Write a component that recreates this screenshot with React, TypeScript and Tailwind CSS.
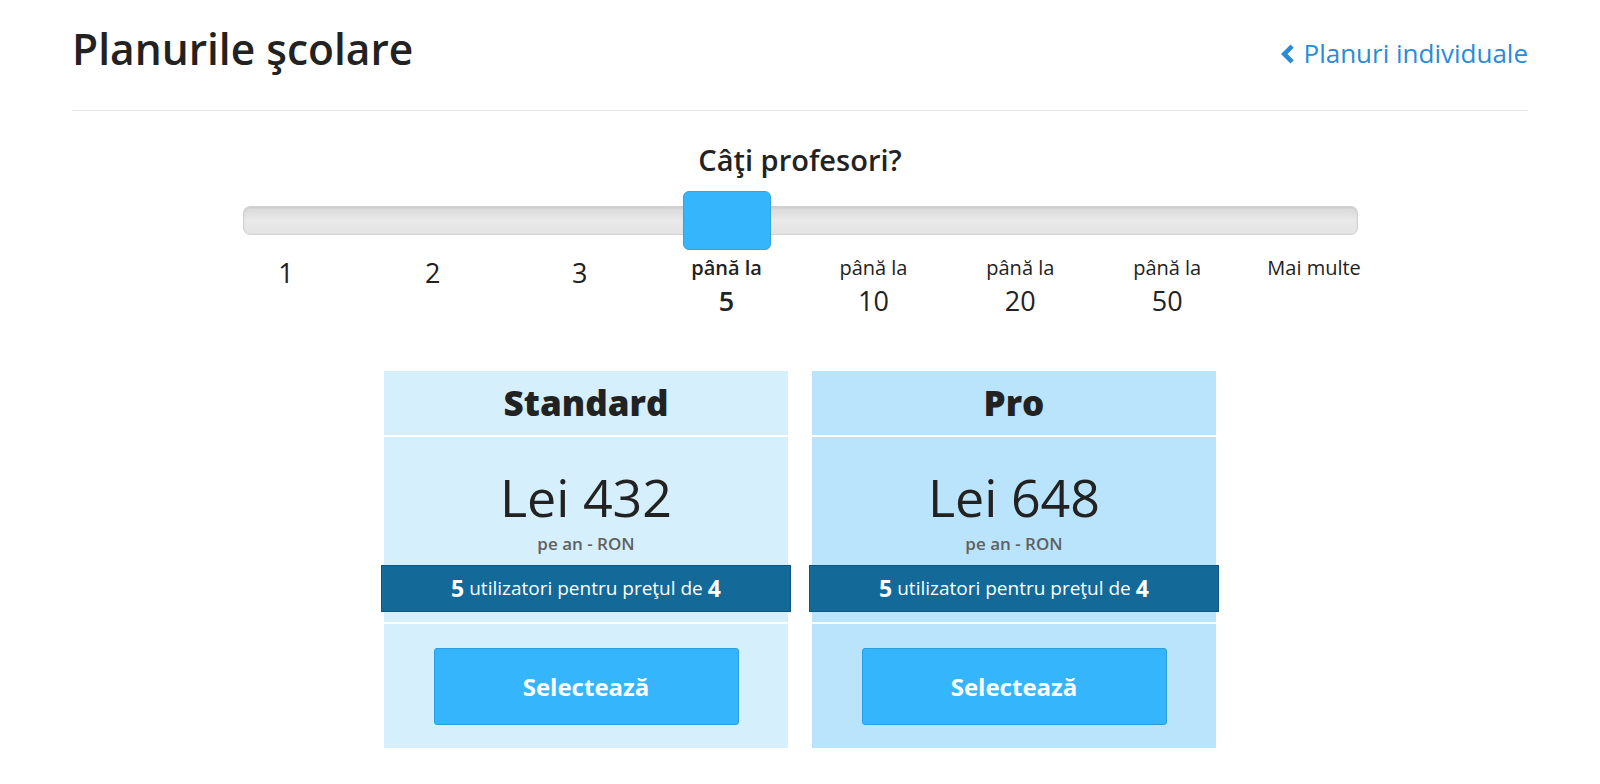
import React from "react";

const steps = [
  { top: "", value: "1" },
  { top: "", value: "2" },
  { top: "", value: "3" },
  { top: "până la", value: "5" },
  { top: "până la", value: "10" },
  { top: "până la", value: "20" },
  { top: "până la", value: "50" },
  { top: "", value: "Mai multe" },
];

const active = 3;

const plans = [
  { name: "Standard", price: "Lei 432", bg: "bg-[#d5effd]" },
  { name: "Pro", price: "Lei 648", bg: "bg-[#b9e4fc]" },
];

function ChevronLeft() {
  return (
    <svg width="15" height="22" viewBox="0 0 15 22" className="fill-[#2a8bd8]">
      <polygon points="1,11 10.5,1.5 13.75,4.75 7.5,11 13.75,17.25 10.5,20.5" />
    </svg>
  );
}

export default function App() {
  return (
    <div className="min-h-screen bg-white font-['Open_Sans',sans-serif] text-[#222]">
      <div className="mx-[72px]">
        {/* header */}
        <div className="flex justify-between items-start pt-[20px] pb-[32px] border-b border-[#e8e8e8]">
          <h1 className="text-[42.5px] leading-[58px] font-semibold text-[#222]">Planurile şcolare</h1>
          <a href="#" className="flex items-center gap-[9px] mt-[16px] text-[26px] leading-[35px] text-[#2a8bd8]">
            <ChevronLeft />
            Planuri individuale
          </a>
        </div>

        {/* teacher count */}
        <div className="flex flex-col items-center pt-[30px]">
          <div className="text-[29px] leading-[38px] font-semibold text-[#222]">Câţi profesori?</div>

          <div className="w-[1175px] mt-[12px]">
            <div className="relative h-[59px] flex items-center">
              <div className="mx-[30px] w-full h-[29px] rounded-[7px] border border-[#d2d2d2] bg-gradient-to-b from-[#d9d9d9] via-[#e9e9e9] to-[#e4e4e4] shadow-[inset_0_1px_2px_rgba(0,0,0,0.08)]" />
              <div className="absolute top-0 left-[470px] w-[88px] h-[59px] rounded-[6px] bg-[#35b6fc] border border-[#2ea4e4]" />
            </div>
            <div className="grid grid-cols-8 mt-[4px]">
              {steps.map((s, i) => (
                <div key={i} className={`flex flex-col items-center ${i === active ? "font-semibold" : "font-normal"}`}>
                  {s.top ? (
                    <>
                      <span className="text-[20px] leading-[28px]">{s.top}</span>
                      <span className="text-[27px] leading-[37px]">{s.value}</span>
                    </>
                  ) : s.value === "Mai multe" ? (
                    <span className="text-[20px] leading-[28px]">{s.value}</span>
                  ) : (
                    <span className="text-[27px] leading-[37px]">{s.value}</span>
                  )}
                </div>
              ))}
            </div>
          </div>
        </div>

        {/* plans */}
        <div className="flex justify-center gap-[24px] mt-[52px]">
          {plans.map((p) => (
            <div key={p.name} className={`w-[404px] ${p.bg}`}>
              <div className="h-[66px] flex items-center justify-center border-b-2 border-white">
                <span className="text-[35px] font-extrabold text-[#222]">{p.name}</span>
              </div>
              <div className="pt-[24px] pb-[10px] border-b-2 border-white flex flex-col items-center">
                <div className="text-[52px] leading-[71px] text-[#222]">{p.price}</div>
                <div className="text-[17px] leading-[23px] font-semibold text-[#606060]">pe an - RON</div>
                <div className="mt-[10px] -mx-[3px] self-stretch h-[47px] bg-[#136997] border border-[#0e5680] flex items-center justify-center text-white text-[19px]">
                  <span className="text-[23px] font-bold mr-[5px]">5</span>
                  utilizatori pentru preţul de
                  <span className="text-[23px] font-bold ml-[5px]">4</span>
                </div>
              </div>
              <div className="flex justify-center pt-[24px] pb-[23px]">
                <button className="w-[305px] h-[77px] rounded-[3px] bg-[#35b6fc] border border-[#2a9ee0] text-white text-[24px] font-bold">
                  Selectează
                </button>
              </div>
            </div>
          ))}
        </div>
      </div>
    </div>
  );
}
